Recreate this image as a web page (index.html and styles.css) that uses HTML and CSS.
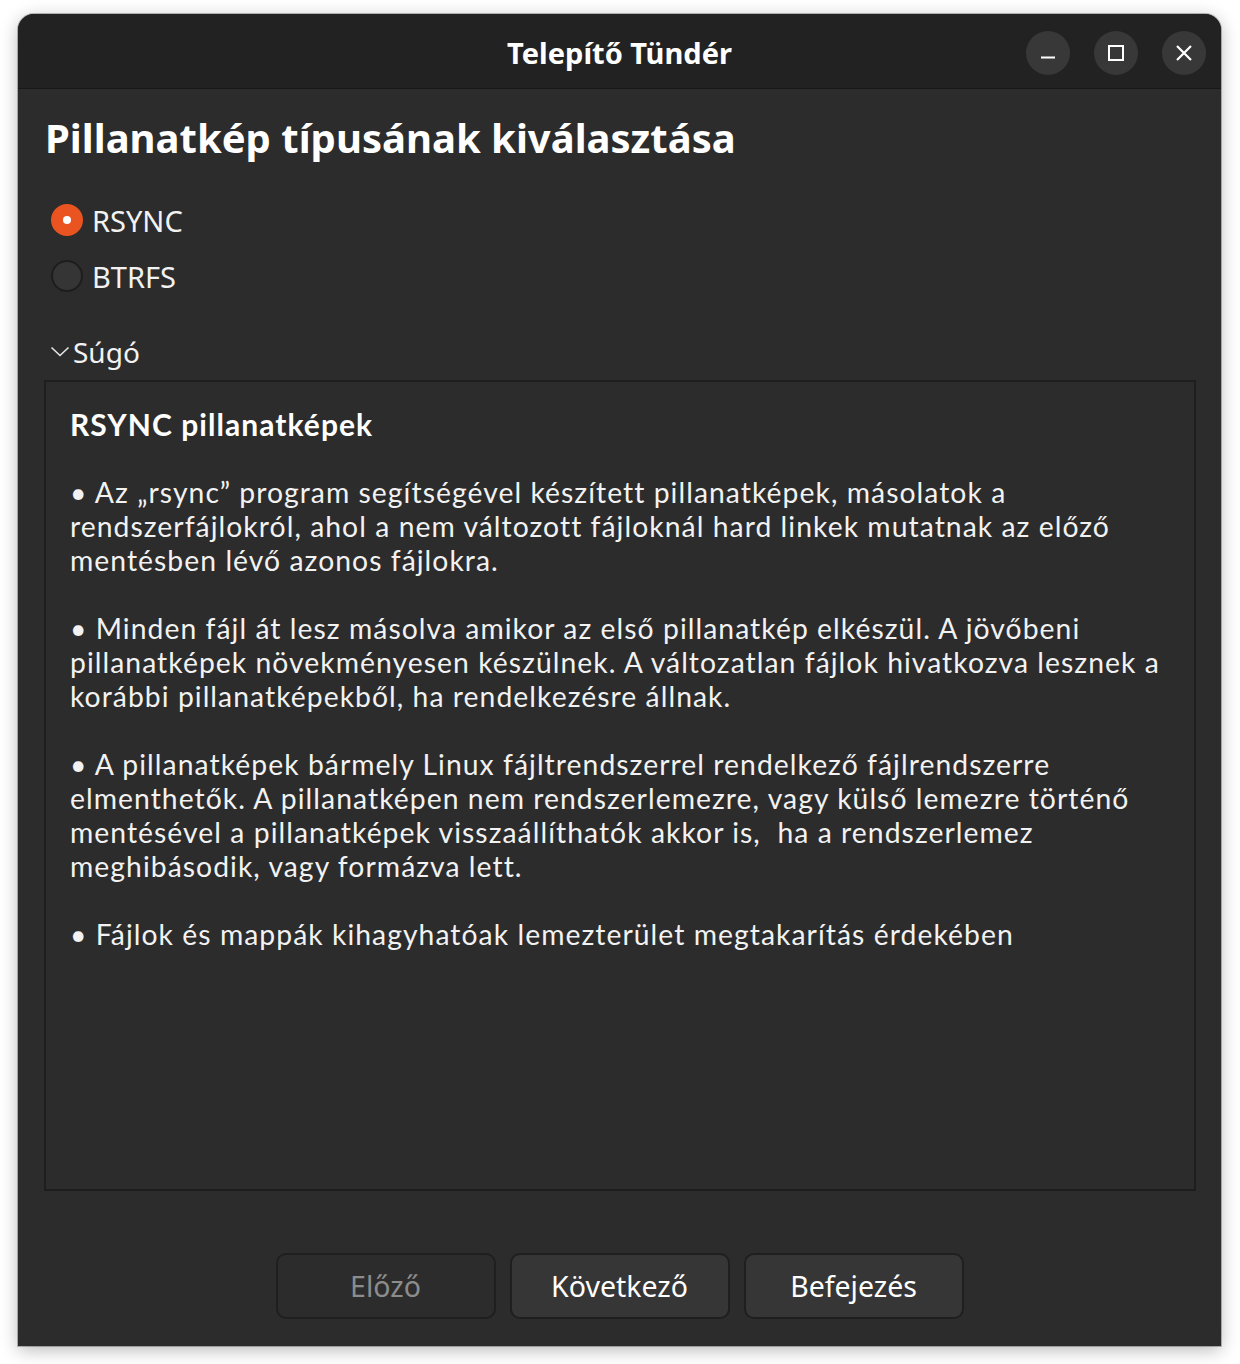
FILE: index.html
```html
<!DOCTYPE html>
<html lang="hu">
<head>
<meta charset="utf-8">
<title>Telepítő Tündér</title>
<link rel="stylesheet" href="styles.css">
</head>
<body>
<div class="window">
  <header class="titlebar">
    <div class="title">Telepítő Tündér</div>
    <div class="controls">
      <button class="ctl" aria-label="Minimize">
        <svg width="20" height="20" viewBox="0 0 20 20"><path d="M3 14.5h14" stroke="#fff" stroke-width="2" fill="none"/></svg>
      </button>
      <button class="ctl" aria-label="Maximize">
        <svg width="20" height="20" viewBox="0 0 20 20"><rect x="3" y="3" width="14" height="14" stroke="#fff" stroke-width="2" fill="none"/></svg>
      </button>
      <button class="ctl" aria-label="Close">
        <svg width="20" height="20" viewBox="0 0 20 20"><path d="M3 3L17 17M17 3L3 17" stroke="#fff" stroke-width="2.2" fill="none"/></svg>
      </button>
    </div>
  </header>
  <main class="content">
    <h1 class="heading">Pillanatkép típusának kiválasztása</h1>
    <div class="radios">
      <label class="radio"><span class="dot checked"></span><span class="rlabel">RSYNC</span></label>
      <label class="radio"><span class="dot"></span><span class="rlabel">BTRFS</span></label>
    </div>
    <div class="expander">
      <svg class="chev" width="20" height="12" viewBox="0 0 20 12"><path d="M1.5 2.5L10 10.5L18.5 2.5" stroke="#e6e6e6" stroke-width="1.6" fill="none"/></svg>
      <span>Súgó</span>
    </div>
    <div class="helpbox">
      <div class="helptitle">RSYNC pillanatképek</div>
      <div class="para">
        <span class="ln">• Az „rsync” program segítségével készített pillanatképek, másolatok a</span>
        <span class="ln">rendszerfájlokról, ahol a nem változott fájloknál hard linkek mutatnak az előző</span>
        <span class="ln">mentésben lévő azonos fájlokra.</span>
      </div>
      <div class="para">
        <span class="ln">• Minden fájl át lesz másolva amikor az első pillanatkép elkészül. A jövőbeni</span>
        <span class="ln">pillanatképek növekményesen készülnek. A változatlan fájlok hivatkozva lesznek a</span>
        <span class="ln">korábbi pillanatképekből, ha rendelkezésre állnak.</span>
      </div>
      <div class="para">
        <span class="ln">• A pillanatképek bármely Linux fájltrendszerrel rendelkező fájlrendszerre</span>
        <span class="ln">elmenthetők. A pillanatképen nem rendszerlemezre, vagy külső lemezre történő</span>
        <span class="ln">mentésével a pillanatképek visszaállíthatók akkor is,&nbsp; ha a rendszerlemez</span>
        <span class="ln">meghibásodik, vagy formázva lett.</span>
      </div>
      <div class="para">
        <span class="ln">• Fájlok és mappák kihagyhatóak lemezterület megtakarítás érdekében</span>
      </div>
    </div>
    <div class="buttons">
      <button class="btn disabled">Előző</button>
      <button class="btn">Következő</button>
      <button class="btn">Befejezés</button>
    </div>
  </main>
</div>
</body>
</html>
```
FILE: styles.css
```css
* { box-sizing: border-box; }
html, body { margin: 0; padding: 0; }
body {
  width: 1240px;
  height: 1364px;
  background: #ffffff;
  font-family: "Noto Sans", "DejaVu Sans", sans-serif;
  overflow: hidden;
}
.window {
  margin: 14px 0 0 18px;
  width: 1203px;
  height: 1332px;
  border-radius: 16px 16px 0 0;
  background: #2c2c2c;
  box-shadow: 0 4px 18px rgba(0,0,0,0.28), 0 0 0 1px rgba(0,0,0,0.25);
  display: flex;
  flex-direction: column;
  overflow: hidden;
}
.titlebar {
  height: 75px;
  flex: none;
  background: #222222;
  border-bottom: 1px solid #181818;
  display: flex;
  align-items: center;
  justify-content: center;
  position: relative;
}
.title {
  color: #ffffff;
  font-weight: 700;
  font-size: 29px;
  margin-top: 2px;
}
.controls {
  position: absolute;
  right: 15px;
  top: 17px;
  display: flex;
  gap: 24px;
}
.ctl {
  width: 44px;
  height: 44px;
  border-radius: 50%;
  border: none;
  background: #383838;
  padding: 0;
  display: flex;
  align-items: center;
  justify-content: center;
}
.content {
  flex: 1;
  display: flex;
  flex-direction: column;
  padding: 0 25px 0 26px;
  color: #f2f2f2;
}
.heading {
  margin: 23px 0 0 1px;
  font-size: 40px;
  font-weight: 700;
  line-height: 52px;
  color: #ffffff;
}
.radios {
  margin-top: 40px;
  display: flex;
  flex-direction: column;
  gap: 24px;
}
.radio {
  display: flex;
  align-items: center;
  height: 32px;
  padding-left: 7px;
}
.dot {
  width: 32px;
  height: 32px;
  border-radius: 50%;
  background: #353535;
  border: 2px solid #1d1d1d;
  flex: none;
  position: relative;
}
.dot.checked {
  background: #e95420;
  border-color: #e95420;
}
.dot.checked::after {
  content: "";
  position: absolute;
  width: 8px;
  height: 8px;
  border-radius: 50%;
  background: #ffffff;
  left: 10px;
  top: 10px;
}
.rlabel {
  margin-left: 9px;
  font-size: 29px;
  color: #f2f2f2;
}
.expander {
  margin-top: 44px;
  display: flex;
  align-items: center;
  height: 32px;
  padding-left: 6px;
  font-size: 28px;
  color: #f2f2f2;
}
.chev { margin-right: 3px; margin-top: -2px; }
.helpbox {
  margin-top: 12px;
  height: 811px;
  border: 2px solid #1e1e1e;
  padding: 25px 24px;
  font-family: "Lato", "Noto Sans", sans-serif;
  font-size: 28.3px;
  line-height: 34px;
  letter-spacing: 1.05px;
  display: flex;
  flex-direction: column;
  gap: 34px;
}
.helptitle {
  font-weight: 700;
  color: #ffffff;
  font-size: 30px;
  height: 34px;
  white-space: nowrap;
}
.para {
  display: flex;
  flex-direction: column;
}
.ln {
  display: block;
  height: 34px;
  white-space: nowrap;
}
.buttons {
  margin-top: 62px;
  display: flex;
  justify-content: center;
  gap: 14px;
  padding-right: 1px;
}
.btn {
  width: 220px;
  height: 66px;
  border-radius: 10px;
  border: 2px solid #1f1f1f;
  background: #363636;
  color: #ffffff;
  font-family: "Noto Sans", "DejaVu Sans", sans-serif;
  font-size: 28.5px;
}
.btn.disabled {
  background: #2c2c2c;
  color: #8c8c8c;
}
```
